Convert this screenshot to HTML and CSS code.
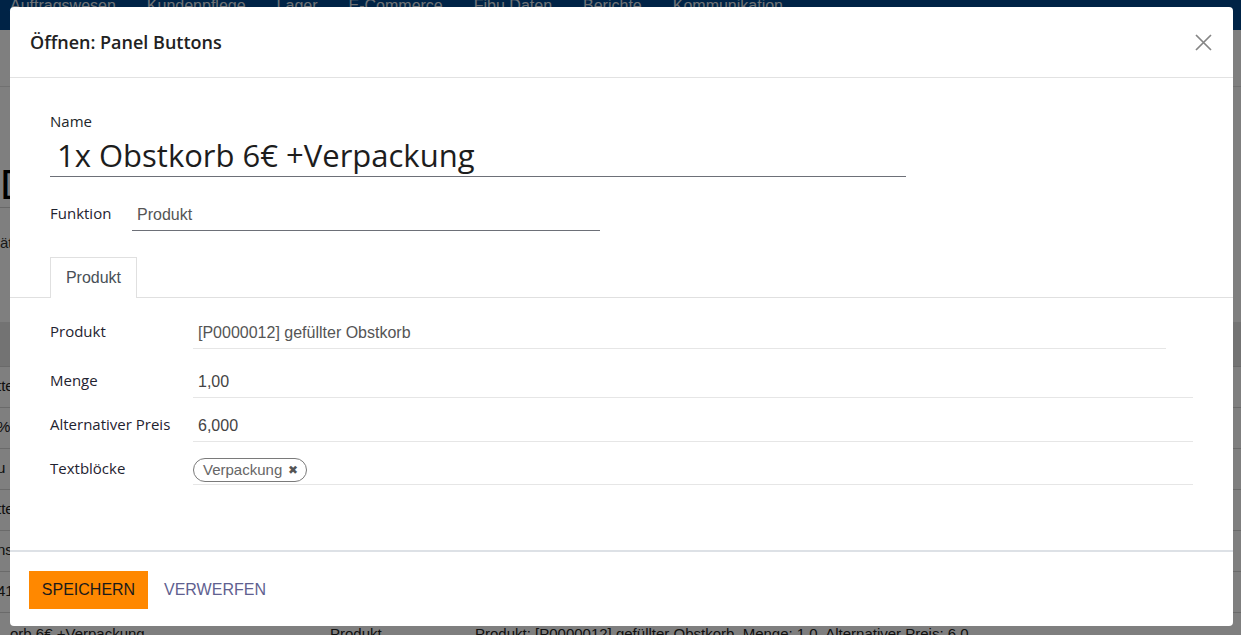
FILE: index.html
```html
<!DOCTYPE html>
<html lang="de">
<head>
<meta charset="utf-8">
<title>Öffnen: Panel Buttons</title>
<link rel="stylesheet" href="styles.css">
</head>
<body>
<div class="page">
  <nav class="navbar">
    <span class="nav-item">Auftragswesen</span>
    <span class="nav-item">Kundenpflege</span>
    <span class="nav-item">Lager</span>
    <span class="nav-item">E-Commerce</span>
    <span class="nav-item">Fibu Daten</span>
    <span class="nav-item">Berichte</span>
    <span class="nav-item">Kommunikation</span>
  </nav>
  <div class="control-panel"></div>
  <div class="bg-sheet">
    <div class="bg-title">D</div>
    <div class="bg-sub">ät</div>
  </div>
  <div class="bg-table">
    <div class="bg-head"></div>
    <div class="bg-row">tte</div>
    <div class="bg-row">%</div>
    <div class="bg-row">u</div>
    <div class="bg-row">tte</div>
    <div class="bg-row">ns</div>
    <div class="bg-row">41</div>
    <div class="bg-row bg-last">
      <span class="c1">orb 6€ +Verpackung</span>
      <span class="c2">Produkt</span>
      <span class="c3">Produkt: [P0000012] gefüllter Obstkorb, Menge: 1,0, Alternativer Preis: 6,0</span>
    </div>
  </div>
  <div class="overlay"></div>
</div>

<div class="modal">
  <header class="modal-header">
    <h4 class="modal-title">Öffnen: Panel Buttons</h4>
    <button class="close" type="button" aria-label="Schließen">
      <svg width="17" height="17" viewBox="0 0 17 17"><path d="M1 1L16 16M16 1L1 16" stroke="#858585" stroke-width="1.7" fill="none"/></svg>
    </button>
  </header>
  <div class="modal-body">
    <div class="name-label">Name</div>
    <div class="name-input">1x Obstkorb 6€ +Verpackung</div>
    <div class="func-row">
      <span class="label">Funktion</span>
      <span class="func-input">Produkt</span>
    </div>
    <div class="tabs">
      <span class="tab">Produkt</span>
    </div>
    <div class="fields">
      <div class="row row-first">
        <div class="label">Produkt</div>
        <div class="value value-m2o">[P0000012] gefüllter Obstkorb</div>
      </div>
      <div class="row">
        <div class="label">Menge</div>
        <div class="value value-num">1,00</div>
      </div>
      <div class="row">
        <div class="label">Alternativer Preis</div>
        <div class="value value-num">6,000</div>
      </div>
      <div class="row">
        <div class="label">Textblöcke</div>
        <div class="value value-tags"><span class="tag">Verpackung <span class="tag-x">✖</span></span></div>
      </div>
    </div>
  </div>
  <footer class="modal-footer">
    <button class="btn btn-primary" type="button">SPEICHERN</button>
    <button class="btn btn-link" type="button">VERWERFEN</button>
  </footer>
</div>
</body>
</html>
```
FILE: styles.css
```css
* { box-sizing: border-box; }
html, body { margin: 0; padding: 0; }
body {
  width: 1241px;
  height: 635px;
  overflow: hidden;
  font-family: "Open Sans", "Liberation Sans", sans-serif;
  background: #fff;
  position: relative;
}
.page { position: relative; height: 635px; overflow: hidden; }
.navbar {
  height: 30px;
  background: #00468c;
  display: flex;
  padding-left: 10px;
  align-items: flex-start;
}
.nav-item {
  color: #dfe3ea;
  font-family: "Liberation Sans", sans-serif;
  font-size: 16px;
  line-height: 16px;
  margin-top: -2px;
  margin-right: 31px;
}
.control-panel { height: 57px; border-bottom: 1px solid #e3e3e3; }
.bg-sheet { height: 235px; display: flow-root; }
.bg-title {
  font-family: "Liberation Sans", sans-serif;
  font-size: 42px;
  line-height: 40px;
  margin-top: 78px;
  margin-left: 0;
  padding-bottom: 2px;
  width: 60px;
  border-bottom: 1px solid #d0d0d0;
  color: #000;
}
.bg-sub { margin-left: 0; margin-top: 26px; font-size: 15px; font-family: "Liberation Sans", sans-serif; color: #333; }
.bg-table { font-family: "Liberation Sans", sans-serif; font-size: 15px; color: #222; }
.bg-head { height: 45px; background: #e6e6e6; border-bottom: 1px solid #d5d5d5; }
.bg-row { height: 41px; border-bottom: 1px solid #d5d5d5; padding-top: 10px; margin-left: -3px; }
.bg-last { display: flex; margin-left: 0; padding: 12px 0 0 10px; border: 0; }
.bg-last .c1 { width: 320px; }
.bg-last .c2 { width: 145px; }
.overlay { position: absolute; inset: 0; background: rgba(0,0,0,0.5); }

.modal {
  position: absolute;
  left: 10px;
  top: 7px;
  width: 1223px;
  height: 619px;
  background: #fff;
  border-radius: 4px;
  display: flex;
  flex-direction: column;
  color: #212529;
}
.modal-header {
  height: 71px;
  border-bottom: 1px solid #e2e2e2;
  display: flex;
  align-items: center;
  justify-content: space-between;
  padding: 0 20px;
}
.modal-title {
  margin: 0;
  font-size: 18px;
  font-weight: 600;
  color: #222;
}
.close {
  background: none;
  border: 0;
  padding: 0;
  width: 17px;
  height: 17px;
  margin-right: 1px;
  display: flex;
}
.modal-body {
  flex: 1;
  padding: 32px 40px 0 40px;
}
.name-label { font-size: 15px; line-height: 22px; }
.name-input {
  width: 856px;
  font-size: 31px;
  line-height: 42px;
  padding: 0 7px;
  border-bottom: 1px solid #6d7078;
  color: #1d1d1d;
  margin-top: 2px;
}
.func-row {
  display: flex;
  align-items: flex-start;
  margin-top: 26px;
}
.label { font-size: 15px; line-height: 20px; color: #1f2330; }
.func-row .label { width: 82px; }
.func-input {
  width: 468px;
  font-family: "Liberation Sans", sans-serif;
  font-size: 16px;
  line-height: 20px;
  padding: 2px 5px 5px;
  color: #555;
  border-bottom: 1px solid #6d7078;
}
.tabs {
  display: flex;
  margin: 26px -40px 0;
  padding-left: 40px;
  border-bottom: 1px solid #e0e0e0;
}
.tab {
  border: 1px solid #e0e0e0;
  border-bottom: 0;
  margin-bottom: -1px;
  background: #fff;
  height: 41px;
  width: 87px;
  display: flex;
  align-items: center;
  justify-content: center;
  font-family: "Liberation Sans", sans-serif;
  font-size: 16px;
  color: #495057;
}
.fields {
  display: flex;
  flex-direction: column;
  gap: 16px;
  padding-top: 23px;
}
.row { display: flex; align-items: flex-start; }
.row-first { margin-bottom: 5px; }
.row .label { width: 143px; flex: none; }
.value {
  width: 1000px;
  font-family: "Liberation Sans", sans-serif;
  font-size: 16px;
  line-height: 20px;
  color: #555;
  padding: 2px 5px 5px;
  border-bottom: 1px solid #e6e6e6;
}
.value-num { color: #444; }
.value-m2o { width: 973px; }
.value-tags { padding: 0 0 2px 0; }
.tag {
  display: inline-flex;
  align-items: center;
  gap: 6px;
  height: 24px;
  padding: 0 8px 0 9px;
  border: 1px solid #7a7a7a;
  border-radius: 12px;
  font-size: 15px;
  color: #666;
}
.tag-x { font-size: 12px; color: #555; }

.modal-footer {
  border-top: 2px solid #dde1e6;
  height: 76px;
  display: flex;
  align-items: flex-start;
  padding: 19px 19px 0;
  gap: 16px;
}
.btn {
  font-family: "Liberation Sans", sans-serif;
  font-size: 16px;
  height: 38px;
  border: 0;
  padding: 0 12px;
  cursor: pointer;
}
.btn-primary { background: #ff8800; color: #1b1b1b; width: 119px; }
.btn-link { background: none; color: #5f6190; padding: 0; }
```
